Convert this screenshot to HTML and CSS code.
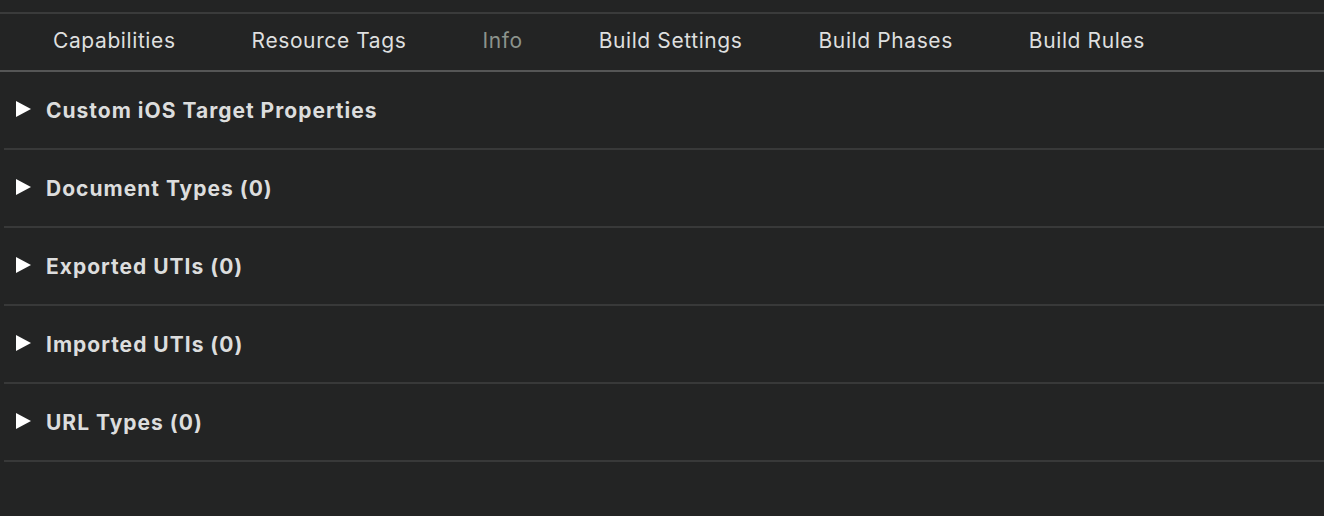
FILE: index.html
```html
<!DOCTYPE html>
<html>
<head>
<meta charset="utf-8">
<link rel="stylesheet" href="styles.css">
</head>
<body>
<div class="topline"></div>
<nav class="tabs">
  <span class="tab">Capabilities</span>
  <span class="tab">Resource Tags</span>
  <span class="tab active">Info</span>
  <span class="tab">Build Settings</span>
  <span class="tab">Build Phases</span>
  <span class="tab">Build Rules</span>
</nav>
<div class="sections">
  <div class="row"><span class="tri"></span><span class="label">Custom iOS Target Properties</span></div>
  <div class="row"><span class="tri"></span><span class="label">Document Types (0)</span></div>
  <div class="row"><span class="tri"></span><span class="label">Exported UTIs (0)</span></div>
  <div class="row"><span class="tri"></span><span class="label">Imported UTIs (0)</span></div>
  <div class="row"><span class="tri"></span><span class="label">URL Types (0)</span></div>
</div>
</body>
</html>
```
FILE: styles.css
```css
html, body {
  margin: 0;
  padding: 0;
  background: #232424;
  height: 100%;
}
body {
  font-family: Inter, "Liberation Sans", sans-serif;
  padding-top: 12px;
  box-sizing: border-box;
}
.topline {
  height: 2px;
  background: #3a3b3b;
}
.tabs {
  display: flex;
  gap: 76px;
  padding-left: 53px;
  height: 58px;
  padding-bottom: 4px;
  align-items: center;
  border-bottom: 2px solid #555656;
  box-sizing: border-box;
}
.tab {
  color: #dedfdf;
  font-size: 21px;
  letter-spacing: 0.6px;
}
.tab.active {
  color: #8c938c;
}
.sections {
  padding-left: 4px;
}
.row {
  height: 78px;
  display: flex;
  align-items: center;
  border-bottom: 2px solid #383939;
  box-sizing: border-box;
}
.tri {
  width: 0;
  height: 0;
  border-top: 8.5px solid transparent;
  border-bottom: 8.5px solid transparent;
  border-left: 15px solid #ffffff;
  margin-left: 12px;
  margin-right: 15px;
  margin-top: -2px;
}
.label {
  color: #dcdddd;
  font-size: 21px;
  font-weight: 700;
  letter-spacing: 1px;
}
```
